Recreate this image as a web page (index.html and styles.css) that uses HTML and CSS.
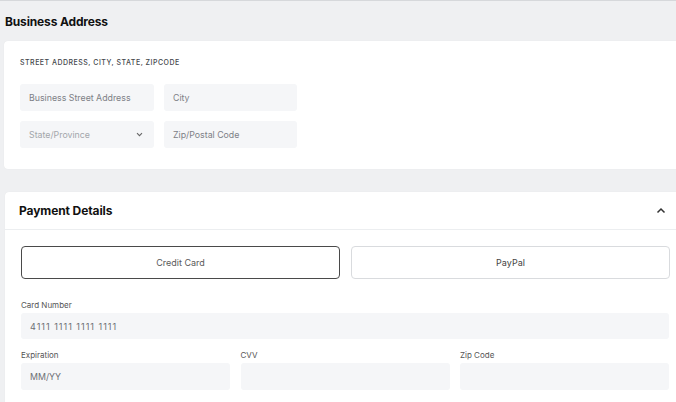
FILE: index.html
```html
<!DOCTYPE html>
<html>
<head>
<meta charset="utf-8">
<link rel="stylesheet" href="styles.css">
</head>
<body>
<div class="page">
  <h2 class="section-title">Business Address</h2>
  <div class="card address-card">
    <div class="caps-label">STREET ADDRESS, CITY, STATE, ZIPCODE</div>
    <div class="address-grid">
      <div class="field">Business Street Address</div>
      <div class="field">City</div>
      <div class="field select">
        <span class="muted">State/Province</span>
        <svg class="chev" width="7" height="5" viewBox="0 0 7 5"><path d="M1 1.2 L3.5 3.7 L6 1.2" fill="none" stroke="#666" stroke-width="1.1"/></svg>
      </div>
      <div class="field">Zip/Postal Code</div>
    </div>
  </div>

  <div class="card payment-card">
    <div class="payment-header">
      <span class="payment-title">Payment Details</span>
      <svg class="chev-up" width="10" height="7" viewBox="0 0 10 7"><path d="M1.5 5.5 L5 2 L8.5 5.5" fill="none" stroke="#333" stroke-width="1.5"/></svg>
    </div>
    <div class="payment-body">
      <div class="method-row">
        <div class="method active">Credit Card</div>
        <div class="method">PayPal</div>
      </div>
      <div class="field-label">Card Number</div>
      <div class="field wide value digits">4111 1111 1111 1111</div>
      <div class="triple">
        <div class="col">
          <div class="field-label">Expiration</div>
          <div class="field value">MM/YY</div>
        </div>
        <div class="col">
          <div class="field-label">CVV</div>
          <div class="field"></div>
        </div>
        <div class="col">
          <div class="field-label">Zip Code</div>
          <div class="field"></div>
        </div>
      </div>
    </div>
  </div>
</div>
</body>
</html>
```
FILE: styles.css
```css
html, body {
  margin: 0;
  padding: 0;
  overflow: hidden;
  background: #eff0f2;
}
body {
  font-family: Inter, "Noto Sans", sans-serif;
  color: #111;
  border-top: 1px solid #d6d8db;
}
.page {
  width: 681px;
  padding: 0 0 0 4px;
}
.section-title {
  margin: 0;
  padding: 13px 0 0 1px;
  height: 27px;
  font-size: 12px;
  font-weight: 700;
  letter-spacing: -0.15px;
  color: #111;
}
.card {
  background: #fff;
  border-radius: 4px;
  box-shadow: 0 0 1px rgba(0,0,0,0.08);
}
.address-card {
  height: 128px;
  padding: 17px 16px 0 16px;
  box-sizing: border-box;
}
.caps-label {
  font-size: 7px;
  font-weight: 500;
  letter-spacing: 0.5px;
  color: #44474c;
  height: 26px;
  line-height: 9px;
}
.address-grid {
  display: grid;
  grid-template-columns: 134px 133px;
  grid-auto-rows: 27px;
  column-gap: 10px;
  row-gap: 10px;
}
.field {
  background: #f5f6f8;
  border-radius: 3px;
  height: 27px;
  box-sizing: border-box;
  padding: 0 9px;
  display: flex;
  align-items: center;
  font-size: 8.8px;
  color: #7d8086;
}
.select {
  justify-content: space-between;
  padding-right: 11px;
}
.muted { color: #a3a6ab; }
.payment-card {
  margin-top: 23px;
  margin-left: 1px;
  border-radius: 4px 4px 0 0;
  min-height: 220px;
}
.payment-header {
  height: 38px;
  box-sizing: border-box;
  border-bottom: 1px solid #eceef0;
  display: flex;
  align-items: center;
  justify-content: space-between;
  padding: 0 19px 0 14px;
}
.payment-title {
  font-size: 12px;
  font-weight: 700;
  color: #111;
  letter-spacing: -0.1px;
}
.payment-body {
  padding: 16px 11px 0 16px;
}
.method-row {
  display: grid;
  grid-template-columns: 319px 319px;
  column-gap: 11px;
  margin-bottom: 21px;
}
.method {
  height: 33px;
  box-sizing: border-box;
  border: 1px solid #d9dbde;
  border-radius: 4px;
  display: flex;
  align-items: center;
  justify-content: center;
  font-size: 9px;
  color: #444;
}
.method.active {
  border: 1.5px solid #4a4a4a;
  color: #5a5a5a;
}
.field-label {
  font-size: 8px;
  color: #555;
  height: 13px;
  line-height: 10px;
}
.field.wide {
  width: 648px;
  height: 26px;
}
.value { color: #6c6f74; }
.digits { letter-spacing: 1px; font-size: 9px; }
.triple {
  display: grid;
  grid-template-columns: 209px 209px 209px;
  column-gap: 10.5px;
  margin-top: 11px;
  width: 648px;
}
.triple .field { height: 27px; }
```
